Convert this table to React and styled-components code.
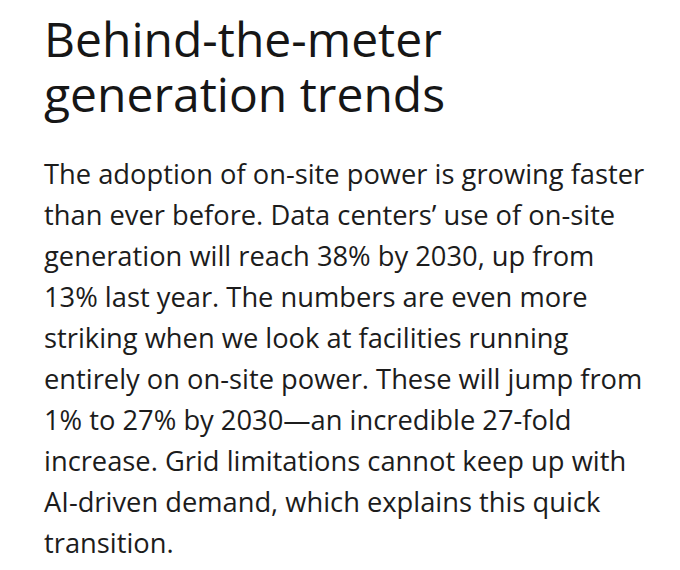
import styled, { createGlobalStyle } from 'styled-components';

const GlobalStyle = createGlobalStyle`
  body {
    margin: 0;
    background-color: #ffffff;
    font-family: 'Open Sans', 'Noto Sans', sans-serif;
  }
`

const Article = styled.section`
  padding: 11px 20px 0 44px;
  color: #1c1c1c;
`

const Heading = styled.h2`
  margin: 0 0 32px;
  font-size: 48px;
  font-weight: 400;
  line-height: 55px;
  color: #161616;
`

const Body = styled.p`
  margin: 0;
  font-size: 27.3px;
  line-height: 41px;
  font-weight: 400;
  white-space: nowrap;
`

const lines = [
  'The adoption of on-site power is growing faster',
  'than ever before. Data centers’ use of on-site',
  'generation will reach 38% by 2030, up from',
  '13% last year. The numbers are even more',
  'striking when we look at facilities running',
  'entirely on on-site power. These will jump from',
  '1% to 27% by 2030—an incredible 27-fold',
  'increase. Grid limitations cannot keep up with',
  'AI-driven demand, which explains this quick',
  'transition.',
]

const App = () => {
  return (
    <>
      <GlobalStyle />
      <Article>
        <Heading>Behind-the-meter<br />generation trends</Heading>
        <Body>
          {lines.map((line, i) => (
            <span key={i}>{line}{i < lines.length - 1 && <br />}</span>
          ))}
        </Body>
      </Article>
    </>
  )
}

export default App
